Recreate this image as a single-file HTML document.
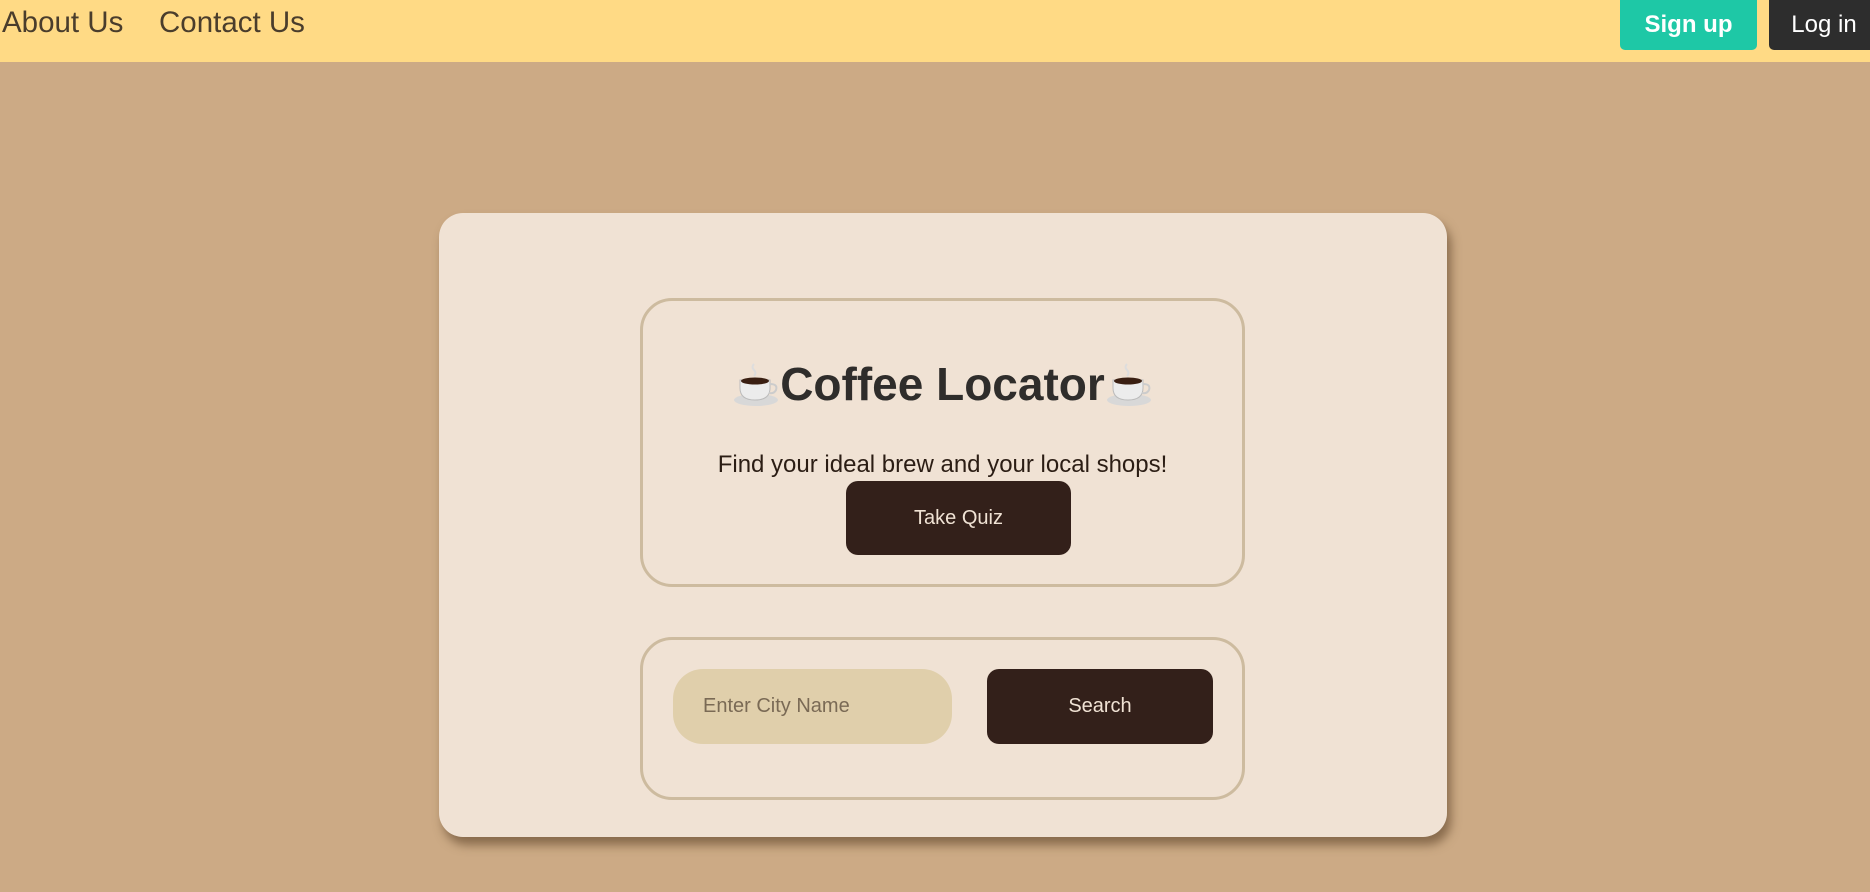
<!DOCTYPE html>
<html><head><meta charset="utf-8"><style>
*{box-sizing:border-box;margin:0;padding:0}
body{width:1870px;height:892px;background:#ccaa85;font-family:"Liberation Sans",sans-serif;position:relative;overflow:hidden}
.nav{position:absolute;left:0;top:0;width:1870px;height:62px;background:#ffda85}
.nav a{position:absolute;top:6px;font-size:29.5px;color:#4a3d2c;text-decoration:none}
.btn{position:absolute;display:flex;align-items:center;justify-content:center}
.card{position:absolute;left:439px;top:213px;width:1008px;height:624px;background:#f0e2d4;border-radius:24px;box-shadow:4px 8px 10px rgba(80,55,30,.55)}
.box{position:absolute;border:3px solid #cdbb9f;border-radius:32px}
h1{position:absolute;left:0;width:100%;text-align:center;font-size:46px;font-weight:bold;color:#2f2d2b;display:flex;justify-content:center;align-items:center}
</style></head><body>
<div class="nav">
<a style="left:2px">About Us</a><a style="left:159px">Contact Us</a>
<div class="btn" style="left:1620px;top:0;width:137px;height:50px;background:#1ec8a6;color:#fff;font-weight:bold;font-size:24px;border-radius:0 0 5px 5px">Sign up</div>
<div class="btn" style="left:1769px;top:0;width:110px;height:50px;background:#2d2d2d;color:#fff;font-size:24px;border-radius:0 0 0 5px">Log in</div>
</div>
<div class="card"></div>
<div class="box" style="left:640px;top:298px;width:605px;height:289px">
<h1 style="top:56px">
<svg width="48" height="48" viewBox="0 0 48 48"><path d="M22 4 q-3 3 0 6 q3 3 0 6" fill="none" stroke="#ddd" stroke-width="2"/><ellipse cx="24" cy="40" rx="22" ry="6" fill="#d8d8d8"/><path d="M8 20 h30 v8 q0 12 -15 12 q-15 0 -15 -12z" fill="#ececec" stroke="#bbb"/><path d="M38 24 q8 0 6 6 q-2 4 -7 3" fill="none" stroke="#ccc" stroke-width="2"/><ellipse cx="23" cy="21" rx="14" ry="3.5" fill="#3a1f12"/></svg>Coffee Locator<svg width="48" height="48" viewBox="0 0 48 48"><path d="M22 4 q-3 3 0 6 q3 3 0 6" fill="none" stroke="#ddd" stroke-width="2"/><ellipse cx="24" cy="40" rx="22" ry="6" fill="#d8d8d8"/><path d="M8 20 h30 v8 q0 12 -15 12 q-15 0 -15 -12z" fill="#ececec" stroke="#bbb"/><path d="M38 24 q8 0 6 6 q-2 4 -7 3" fill="none" stroke="#ccc" stroke-width="2"/><ellipse cx="23" cy="21" rx="14" ry="3.5" fill="#3a1f12"/></svg></h1>
<div style="position:absolute;top:150px;width:100%;text-align:center;font-size:24px;color:#2b1d14">Find your ideal brew and your local shops!</div>
<div class="btn" style="left:203px;top:180px;width:225px;height:74px;background:#33201a;color:#f0e2d4;font-size:20px;border-radius:12px">Take Quiz</div>
</div>
<div class="box" style="left:640px;top:637px;width:605px;height:163px">
<div style="position:absolute;left:30px;top:29px;width:279px;height:75px;background:#e0cfab;border-radius:30px;padding-left:30px;line-height:75px;font-size:20px;color:#7a6a55">Enter City Name</div>
<div class="btn" style="left:344px;top:29px;width:226px;height:75px;background:#33201a;color:#f0e2d4;font-size:20px;border-radius:12px">Search</div>
</div>
</body></html>
